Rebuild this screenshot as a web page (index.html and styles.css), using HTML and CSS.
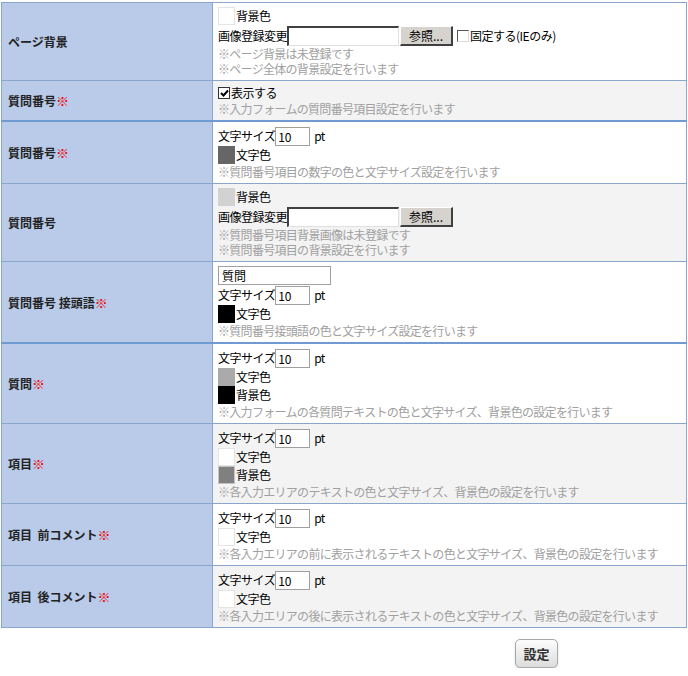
FILE: index.html
```html
<!DOCTYPE html>
<html lang="ja">
<head>
	<meta charset="UTF-8"/>
	<title>デザイン設定</title>
	<link rel="stylesheet" href="styles.css">
</head>
<body>
	<!-- Design settings table -->
	<table class="settings">
		<colgroup>
			<col class="col-label">
			<col>
		</colgroup>
		<tr>
			<th>ページ背景</th>
			<td>
				<div class="line"><span class="swatch sw-white"></span>背景色</div>
				<div class="line line-file">画像登録変更<input class="file-text" type="text"><button class="browse">参照...</button><span class="check"></span>固定する(IEのみ)</div>
				<p class="note">※ページ背景は未登録です</p>
				<p class="note">※ページ全体の背景設定を行います</p>
			</td>
		</tr>
		<tr class="alt">
			<th>質問番号<span class="req">※</span></th>
			<td>
				<div class="line line-check"><span class="check checked"><svg width="9" height="9" viewBox="0 0 9 9"><path d="M1 4 L3.5 6.5 L8 1.5" fill="none" stroke="#000" stroke-width="2"/></svg></span>表示する</div>
				<p class="note">※入力フォームの質問番号項目設定を行います</p>
			</td>
		</tr>
		<tr class="section">
			<th>質問番号<span class="req">※</span></th>
			<td>
				<div class="line line-size">文字サイズ<input class="size" type="text" value="10"><span class="unit">pt</span></div>
				<div class="line"><span class="swatch sw-dark"></span>文字色</div>
				<p class="note">※質問番号項目の数字の色と文字サイズ設定を行います</p>
			</td>
		</tr>
		<tr class="alt">
			<th>質問番号</th>
			<td>
				<div class="line"><span class="swatch sw-light"></span>背景色</div>
				<div class="line line-file">画像登録変更<input class="file-text" type="text"><button class="browse">参照...</button></div>
				<p class="note">※質問番号項目背景画像は未登録です</p>
				<p class="note">※質問番号項目の背景設定を行います</p>
			</td>
		</tr>
		<tr>
			<th>質問番号 接頭語<span class="req">※</span></th>
			<td>
				<div class="line line-text"><input class="prefix" type="text" value="質問"></div>
				<div class="line line-size">文字サイズ<input class="size" type="text" value="10"><span class="unit">pt</span></div>
				<div class="line"><span class="swatch sw-black"></span>文字色</div>
				<p class="note">※質問番号接頭語の色と文字サイズ設定を行います</p>
			</td>
		</tr>
		<tr class="section">
			<th>質問<span class="req">※</span></th>
			<td>
				<div class="line line-size">文字サイズ<input class="size" type="text" value="10"><span class="unit">pt</span></div>
				<div class="line"><span class="swatch sw-grey"></span>文字色</div>
				<div class="line"><span class="swatch sw-black"></span>背景色</div>
				<p class="note">※入力フォームの各質問テキストの色と文字サイズ、背景色の設定を行います</p>
			</td>
		</tr>
		<tr class="alt">
			<th>項目<span class="req">※</span></th>
			<td>
				<div class="line line-size">文字サイズ<input class="size" type="text" value="10"><span class="unit">pt</span></div>
				<div class="line"><span class="swatch sw-white"></span>文字色</div>
				<div class="line"><span class="swatch sw-mid"></span>背景色</div>
				<p class="note">※各入力エリアのテキストの色と文字サイズ、背景色の設定を行います</p>
			</td>
		</tr>
		<tr>
			<th>項目&nbsp;&nbsp;前コメント<span class="req">※</span></th>
			<td>
				<div class="line line-size">文字サイズ<input class="size" type="text" value="10"><span class="unit">pt</span></div>
				<div class="line"><span class="swatch sw-white"></span>文字色</div>
				<p class="note">※各入力エリアの前に表示されるテキストの色と文字サイズ、背景色の設定を行います</p>
			</td>
		</tr>
		<tr class="alt">
			<th>項目&nbsp;&nbsp;後コメント<span class="req">※</span></th>
			<td>
				<div class="line line-size">文字サイズ<input class="size" type="text" value="10"><span class="unit">pt</span></div>
				<div class="line"><span class="swatch sw-white"></span>文字色</div>
				<p class="note">※各入力エリアの後に表示されるテキストの色と文字サイズ、背景色の設定を行います</p>
			</td>
		</tr>
	</table>
	<!-- Submit -->
	<div class="actions">
		<button class="submit">設定</button>
	</div>
</body>
</html>
```

FILE: styles.css
```css
	/* Base page */
	body {
		margin: 0;
		padding: 2px 0 0 1px;
		font-family: "Noto Sans CJK JP", "Noto Sans", sans-serif;
		font-size: 12px;
		color: #000;
		background: #fff;
	}
	/* Settings table */
	.settings {
		border-collapse: collapse;
		table-layout: fixed;
		width: 686px;
	}
	.settings .col-label {
		width: 211px;
	}
	.settings th,
	.settings td {
		border: 1px solid #8ba6cc;
	}
	.settings th {
		padding: 0 6px;
		background-color: #b9cbe9;
		text-align: left;
		font-weight: bold;
		color: #222;
		white-space: nowrap;
	}
	.settings td {
		padding: 4px 5px;
		background-color: #fff;
	}
	.settings tr.alt td {
		background-color: #f3f3f3;
	}
	/* Thicker blue rule above a new section */
	.settings tr.section th,
	.settings tr.section td {
		border-top: 2px solid #6f9ad2;
	}
	.req {
		color: #f00000;
		font-size: 13px;
	}
	/* One line of controls */
	.line {
		display: flex;
		align-items: center;
		height: 18px;
		line-height: 18px;
		letter-spacing: -0.5px;
		white-space: nowrap;
	}
	.line-size {
		height: 20px;
	}
	.line-file {
		height: 21px;
	}
	.line-text {
		height: 19px;
	}
	.line-check {
		height: 16px;
	}
	.note {
		margin: 0;
		height: 15px;
		line-height: 15px;
		letter-spacing: -0.7px;
		color: #a0a0a0;
		white-space: nowrap;
	}
	/* Colour swatches */
	.swatch {
		display: inline-block;
		width: 15px;
		height: 16px;
		border: 1px solid #e4e4e4;
		margin-right: 1px;
	}
	.sw-white { background-color: #fff; }
	.sw-dark { background-color: #666; border-color: #666; }
	.sw-light { background-color: #d2d2d2; border-color: #d2d2d2; }
	.sw-black { background-color: #000; border-color: #000; }
	.sw-grey { background-color: #aaa; border-color: #aaa; }
	.sw-mid { background-color: #808080; border-color: #c4c4c4; }
	/* Inputs */
	.file-text {
		box-sizing: border-box;
		width: 112px;
		height: 20px;
		margin: 0;
		padding: 0 2px;
		border-style: solid;
		border-width: 2px 1px 1px 2px;
		border-color: #404040 #e0e0e0 #e0e0e0 #404040;
		background: #fff;
	}
	.browse {
		box-sizing: border-box;
		width: 53px;
		height: 20px;
		margin: 0 4px 0 1px;
		padding: 0;
		font-family: inherit;
		font-size: 12px;
		background-color: #d6d3ce;
		border-style: solid;
		border-width: 1px 2px 2px 1px;
		border-color: #fff #404040 #404040 #fff;
	}
	.size {
		box-sizing: border-box;
		width: 35px;
		height: 19px;
		margin: 0 4px 0 0;
		padding: 0 2px;
		font-family: inherit;
		font-size: 12px;
		border: 1px solid #a0a0a0;
	}
	.prefix {
		box-sizing: border-box;
		width: 113px;
		height: 19px;
		margin: 0;
		padding: 0 3px;
		font-family: inherit;
		font-size: 12px;
		border: 1px solid #a0a0a0;
	}
	/* Check boxes */
	.check {
		box-sizing: border-box;
		display: inline-flex;
		align-items: center;
		justify-content: center;
		width: 12px;
		height: 12px;
		margin-right: 1px;
		border-style: solid;
		border-width: 1px;
		border-color: #555 #ddd #ddd #555;
		background: #fff;
	}
	.check.checked {
		border-color: #333;
	}
	/* Submit row */
	.actions {
		display: flex;
		padding: 11px 0 0 514px;
	}
	.submit {
		width: 43px;
		height: 29px;
		padding: 0;
		font-family: inherit;
		font-size: 13px;
		font-weight: bold;
		color: #333;
		background: linear-gradient(#fdfdfd, #dcdcdc);
		border: 1px solid #a8a8a8;
		border-radius: 5px;
		box-shadow: 0 1px 2px rgba(0, 0, 0, 0.15);
	}
```
